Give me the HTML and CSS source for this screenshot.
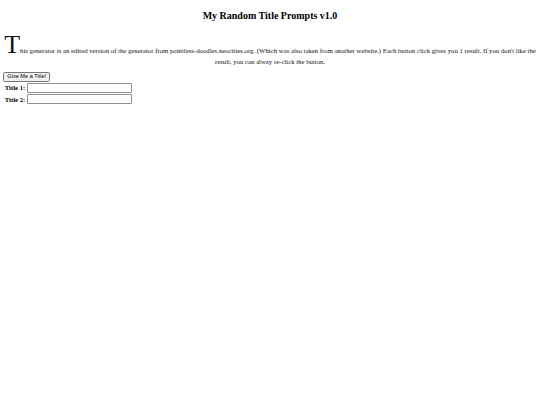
FILE: index.html
```html
<!DOCTYPE html>
<html>
<head>
<meta charset="utf-8">
<title>My Random Title Prompts v1.0</title>
<link rel="stylesheet" href="styles.css">
</head>
<body>
<h2 class="title">My Random Title Prompts v1.0</h2>
<p class="intro"><span class="dropcap">T</span>his generator is an edited version of the generator from pointless-doodles.neocities.org. (Which was also taken from another website.) Each button click gives you 1 result. If you don't like the result, you can alway re-click the button.</p>
<form class="gen">
<button type="button" class="btn">Give Me a Title!</button>
<div class="row"><label class="lbl">Title 1:</label> <input class="field" type="text"></div>
<div class="row"><label class="lbl">Title 2:</label> <input class="field" type="text"></div>
</form>
</body>
</html>
```
FILE: styles.css
```css
html, body {
  background: #fff;
}
body {
  margin: 3.3px;
  font-family: "Liberation Serif", "Times New Roman", serif;
  color: #000;
}
.title {
  font-size: 10px;
  font-weight: bold;
  text-align: center;
  margin: 6.5px 0 11px;
}
.intro {
  font-size: 6.75px;
  text-align: center;
  margin: 11px 0 7.5px;
  color: #111;
}
.dropcap {
  font-size: 26px;
  line-height: 1;
}
.gen {
  margin: 0;
}
.btn {
  font-family: "Liberation Sans", Arial, sans-serif;
  font-size: 5.6px;
  padding: 1px 3px;
  height: 9.5px;
  line-height: 1;
  border: 0.5px solid #767676;
  border-radius: 1.5px;
  background: #efefef;
  color: #000;
  display: block;
  margin: 0;
}
.row {
  display: flex;
  align-items: center;
  gap: 1.5px;
  font-size: 6.67px;
  margin-left: 1.5px;
  height: 11.5px;
}
.lbl {
  font-weight: bold;
}
.field {
  width: 105px;
  height: 10px;
  box-sizing: border-box;
  border: 0.5px solid #8f8f8f;
  border-radius: 1px;
  padding: 0;
  margin: 0;
  font-size: 6px;
}
```
